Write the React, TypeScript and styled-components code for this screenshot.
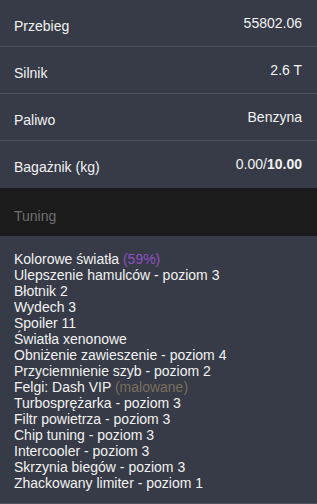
import React from "react";
import styled, { createGlobalStyle } from "styled-components";

const Global = createGlobalStyle`
  html, body { margin: 0; padding: 0; background: #363b47; }
  body { font-family: "Liberation Sans", Arial, sans-serif; font-size: 14px; }
`;

const Panel = styled.div`
  width: 317px;
  background: #363b47;
  color: #f2f2f2;
`;

const Row = styled.div`
  display: flex;
  justify-content: space-between;
  align-items: flex-start;
  height: 46px;
  box-sizing: content-box;
  padding: 0 15px 0 14px;
  border-bottom: 1px solid ${(p: { $last?: boolean }) => (p.$last ? "transparent" : "#4a4f5b")};
  line-height: 16px;
`;

const Label = styled.span`
  padding-top: 18px;
`;

const Value = styled.span`
  padding-top: 15px;
`;

const Strong = styled.b`
  font-weight: 700;
`;

const SectionHeader = styled.div`
  background: #1b1b1b;
  color: #6f6f6f;
  height: 48px;
  box-sizing: border-box;
  padding: 20px 14px 0;
  line-height: 16px;
`;

const List = styled.div`
  padding: 15px 14px 12px;
  line-height: 16px;
  border-bottom: 1px solid #4a4f5b;
`;

const Item = styled.div``;

const Accent = styled.span<{ $color: string }>`
  color: ${(p) => p.$color};
`;

const rows: [string, React.ReactNode][] = [
  ["Przebieg", "55802.06"],
  ["Silnik", "2.6 T"],
  ["Paliwo", "Benzyna"],
  ["Bagażnik (kg)", <>0.00/<Strong>10.00</Strong></>],
];

const items: React.ReactNode[] = [
  <>Kolorowe światła <Accent $color="#8e4fc2">(59%)</Accent></>,
  "Ulepszenie hamulców - poziom 3",
  "Błotnik 2",
  "Wydech 3",
  "Spoiler 11",
  "Światła xenonowe",
  "Obniżenie zawieszenie - poziom 4",
  "Przyciemnienie szyb - poziom 2",
  <>Felgi: Dash VIP <Accent $color="#7b6e5e">(malowane)</Accent></>,
  "Turbosprężarka - poziom 3",
  "Filtr powietrza - poziom 3",
  "Chip tuning - poziom 3",
  "Intercooler - poziom 3",
  "Skrzynia biegów - poziom 3",
  "Zhackowany limiter - poziom 1",
];

export default function App() {
  return (
    <>
      <Global />
      <Panel>
        {rows.map(([l, v], i) => (
          <Row key={i} $last={i === rows.length - 1}>
            <Label>{l}</Label>
            <Value>{v}</Value>
          </Row>
        ))}
        <SectionHeader>Tuning</SectionHeader>
        <List>
          {items.map((it, i) => (
            <Item key={i}>{it}</Item>
          ))}
        </List>
      </Panel>
    </>
  );
}
